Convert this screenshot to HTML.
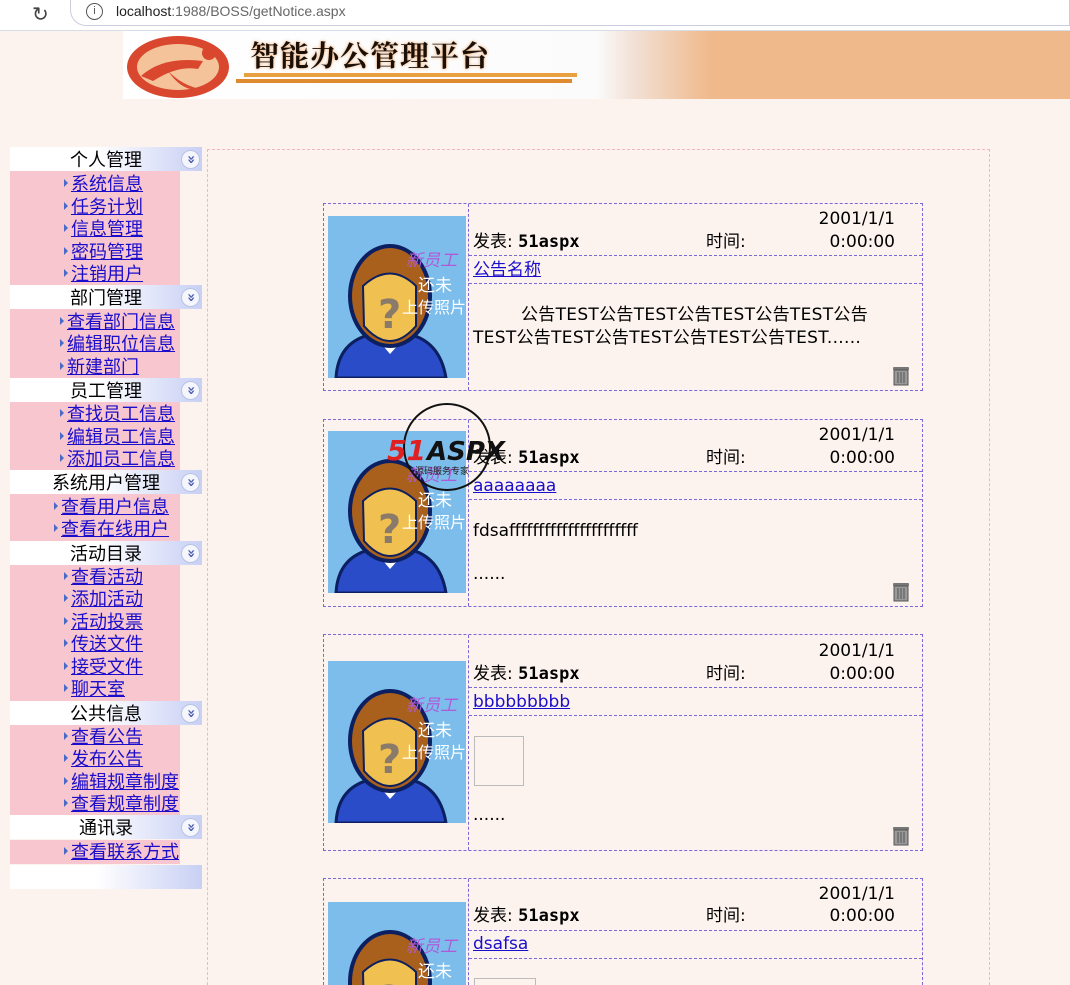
<!DOCTYPE html>
<html><head><meta charset="utf-8">
<style>
*{margin:0;padding:0;box-sizing:border-box}
html{overflow:hidden;width:1070px;height:985px}
body{width:1070px;height:985px;overflow:hidden;background:#fdf3ee;font-family:"DejaVu Sans","Noto Sans CJK SC",sans-serif;position:relative}
.abs{position:absolute}
.bar{left:0;top:0;width:1070px;height:31px;background:#fff;border-bottom:1px solid #d6dde6}
.url{left:70px;top:0;width:1000px;height:26px;border:1px solid #ccd;border-top:none;border-radius:0 0 0 16px;background:#fff}
.hd{left:10px;width:192px;height:24px;background:linear-gradient(90deg,#fff 0%,#fff 45%,#c8d0f4 100%);font:18px "Noto Sans CJK SC",sans-serif;color:#000;text-align:center;line-height:24px}
.hd i{position:absolute;right:2px;top:3px;width:19px;height:19px;border-radius:50%;background:#f4f6fc;border:1px solid #b8c2e6;font:bold 14px "DejaVu Sans",sans-serif;color:#4a5ab0;line-height:16px;font-style:normal;text-align:center;transform:rotate(90deg)}
.pk{left:10px;width:170px;background:#f7c6cf}
.it{position:absolute;width:192px;text-align:left;font:18px "Noto Sans CJK SC",sans-serif;height:22.5px;line-height:22px;white-space:nowrap}
.it a{color:#1a0dcc;text-decoration:underline}
.it b{position:absolute;left:-7px;top:7px;width:0;height:0;border-left:4px solid #4a6ac8;border-top:4px solid transparent;border-bottom:4px solid transparent}
.g4 .it{left:61px}.g6 .it{left:57px}.g6b .it{left:51px}
.card{left:323px;width:600px;border:1px dashed #7b68d8}
.card .v{position:absolute;left:144px;top:0;bottom:0;border-left:1px dashed #7b68d8}
.card .h{position:absolute;left:145px;right:0;border-top:1px dashed #7b68d8}
.t{position:absolute;font-size:17px;color:#000;white-space:nowrap;line-height:20px}
.t a{color:#1a0dcc}
.ph{position:absolute;left:4px;width:138px;height:162px}
.trash{position:absolute;right:11px;width:20px;height:22px}
</style></head><body>
<div class="abs bar"></div>
<div class="abs url"></div>
<div class="abs" style="left:32px;top:2px;font-size:20px;color:#444">&#8635;</div>
<div class="abs" style="left:86px;top:3px;width:17px;height:17px;border:1.5px solid #555;border-radius:50%;font:11px sans-serif;text-align:center;line-height:14px;color:#555">i</div>
<div class="abs" style="left:116px;top:3px;font:14px 'Liberation Sans',sans-serif;color:#222">localhost<span style="color:#666">:1988/BOSS/getNotice.aspx</span></div>

<div class="abs" style="left:123px;top:31px;width:947px;height:68px;background:linear-gradient(90deg,#fff 0%,#fbfbfb 50%,#f2e0d4 54%,#f0b98c 62%,#f0b98c 100%)"></div>
<svg class="abs" style="left:123px;top:31px" width="110" height="68"><ellipse cx="55" cy="36" rx="51" ry="31" fill="#d9472e"/><ellipse cx="55" cy="36" rx="41" ry="23" fill="#f4c39a"/><path d="M18 45 Q40 25 80 30 L75 38 Q55 34 30 50 Z" fill="#d9472e"/><path d="M45 40 Q60 55 78 58 Q60 62 45 40Z" fill="#d9472e"/><circle cx="86" cy="22" r="7" fill="#d9472e"/></svg>
<div class="abs" style="left:250px;top:34px;font:bold 29px 'Noto Serif CJK SC',serif;color:#1a1008;letter-spacing:1px;text-shadow:0 0 3px #f0a060">智能办公管理平台</div>
<div class="abs" style="left:244px;top:73px;width:333px;height:4px;background:#e8a040"></div>
<div class="abs" style="left:236px;top:79px;width:336px;height:4px;background:#e08a30"></div>

<div class="abs" style="left:207px;top:149px;width:783px;height:836px;border:1px dashed #f0b8b8;border-bottom:none"></div>

<div class="abs hd" style="top:147px">个人管理<i>»</i></div>
<div class="abs pk g4" style="top:171px;height:114px">
<div class="it" style="top:1px"><b></b><a>系统信息</a></div>
<div class="it" style="top:24px"><b></b><a>任务计划</a></div>
<div class="it" style="top:46px"><b></b><a>信息管理</a></div>
<div class="it" style="top:69px"><b></b><a>密码管理</a></div>
<div class="it" style="top:91px"><b></b><a>注销用户</a></div></div>
<div class="abs hd" style="top:285px">部门管理<i>»</i></div>
<div class="abs pk g6" style="top:309px;height:69px">
<div class="it" style="top:1px"><b></b><a>查看部门信息</a></div>
<div class="it" style="top:23px"><b></b><a>编辑职位信息</a></div>
<div class="it" style="top:46px"><b></b><a>新建部门</a></div></div>
<div class="abs hd" style="top:378px">员工管理<i>»</i></div>
<div class="abs pk g6" style="top:402px;height:68px">
<div class="it" style="top:0px"><b></b><a>查找员工信息</a></div>
<div class="it" style="top:23px"><b></b><a>编辑员工信息</a></div>
<div class="it" style="top:45px"><b></b><a>添加员工信息</a></div></div>
<div class="abs hd" style="top:470px">系统用户管理<i>»</i></div>
<div class="abs pk g6b" style="top:494px;height:47px">
<div class="it" style="top:1px"><b></b><a>查看用户信息</a></div>
<div class="it" style="top:23px"><b></b><a>查看在线用户</a></div></div>
<div class="abs hd" style="top:541px">活动目录<i>»</i></div>
<div class="abs pk g4" style="top:565px;height:136px">
<div class="it" style="top:0px"><b></b><a>查看活动</a></div>
<div class="it" style="top:22px"><b></b><a>添加活动</a></div>
<div class="it" style="top:45px"><b></b><a>活动投票</a></div>
<div class="it" style="top:67px"><b></b><a>传送文件</a></div>
<div class="it" style="top:90px"><b></b><a>接受文件</a></div>
<div class="it" style="top:112px"><b></b><a>聊天室</a></div></div>
<div class="abs hd" style="top:701px">公共信息<i>»</i></div>
<div class="abs pk g4" style="top:725px;height:90px">
<div class="it" style="top:0px"><b></b><a>查看公告</a></div>
<div class="it" style="top:22px"><b></b><a>发布公告</a></div>
<div class="it" style="top:45px"><b></b><a>编辑规章制度</a></div>
<div class="it" style="top:67px"><b></b><a>查看规章制度</a></div></div>
<div class="abs hd" style="top:815px">通讯录<i>»</i></div>
<div class="abs pk g4" style="top:840px;height:24px">
<div class="it" style="top:0px"><b></b><a>查看联系方式</a></div></div>
<div class="abs hd" style="top:865px"></div>

<svg width="0" height="0" style="position:absolute"><defs>
<g id="ph">
<rect width="138" height="162" fill="#7cbdeb"/>
<path d="M8 162 Q10 125 45 118 L80 118 Q112 125 118 162Z" fill="#2a4cc8" stroke="#0c1f60" stroke-width="3"/>
<path d="M45 118 L62 138 L80 118Z" fill="#fff"/>
<ellipse cx="62" cy="80" rx="40" ry="50" fill="#a8601c" stroke="#0c1f60" stroke-width="4"/>
<path d="M35 70 Q62 45 88 70 L88 110 Q62 140 36 110Z" fill="#f0c050" stroke="#0c1f60" stroke-width="2"/>
<text x="50" y="112" font-size="40" font-weight="bold" fill="#8a7a6a" font-family="DejaVu Sans">?</text>
<text x="78" y="50" font-size="17" fill="#b05ad8" font-style="italic" font-family="Noto Sans CJK SC">新员工</text>
<text x="90" y="75" font-size="17" fill="#fff" font-family="Noto Sans CJK SC">还未</text>
<text x="74" y="97" font-size="16" fill="#fff" font-family="Noto Sans CJK SC">上传照片</text>
</g>
<g id="tr"><rect x="2" y="3" width="16" height="3" rx="1" fill="#777"/><rect x="3" y="6" width="14" height="15" fill="#999" stroke="#555"/><path d="M7 8v11M10 8v11M13 8v11" stroke="#555"/></g>
</defs></svg>

<div class="abs card" style="top:203px;height:188px">
<svg class="ph" style="top:12px" viewBox="0 0 138 162"><use href="#ph"/></svg>
<div class="v"></div>
<div class="t" style="right:27px;top:5px">2001/1/1</div>
<div class="t" style="left:149px;top:28px">发表: <b style="font-family:'DejaVu Sans Mono',monospace">51aspx</b></div>
<div class="t" style="left:382px;top:28px">时间:</div>
<div class="t" style="right:27px;top:28px">0:00:00</div>
<div class="h" style="top:51px"></div>
<div class="t" style="left:149px;top:56px"><a><u>公告名称</u></a></div>
<div class="h" style="top:79px"></div>
<div class="t" style="left:197px;top:101px;letter-spacing:0.3px">公告TEST公告TEST公告TEST公告TEST公告</div>
<div class="t" style="left:149px;top:124px;letter-spacing:0.3px">TEST公告TEST公告TEST公告TEST公告TEST......</div>
<svg class="trash" style="top:160px"><use href="#tr"/></svg>
</div>

<div class="abs card" style="top:419px;height:188px">
<svg class="ph" style="top:11px" viewBox="0 0 138 162"><use href="#ph"/></svg>
<div class="v"></div>
<div class="t" style="right:27px;top:5px">2001/1/1</div>
<div class="t" style="left:149px;top:28px">发表: <b style="font-family:'DejaVu Sans Mono',monospace">51aspx</b></div>
<div class="t" style="left:382px;top:28px">时间:</div>
<div class="t" style="right:27px;top:28px">0:00:00</div>
<div class="h" style="top:51px"></div>
<div class="t" style="left:149px;top:56px"><a><u>aaaaaaaa</u></a></div>
<div class="h" style="top:79px"></div>
<div class="t" style="left:149px;top:101px">fdsaffffffffffffffffffffff</div>
<div class="t" style="left:149px;top:144px">......</div>
<svg class="trash" style="top:160px"><use href="#tr"/></svg>
</div>
<svg class="abs" style="left:385px;top:402px" width="130" height="95"><circle cx="62" cy="45" r="43" fill="none" stroke="#111" stroke-width="2"/><text x="2" y="58" font-size="28" font-weight="bold" font-style="italic" fill="#e02020" font-family="DejaVu Sans">51</text><text x="42" y="58" font-size="26" font-weight="bold" font-style="italic" fill="#111" font-family="DejaVu Sans">ASPX</text><text x="30" y="72" font-size="9" fill="#222" font-family="Noto Sans CJK SC">源码服务专家</text></svg>

<div class="abs card" style="top:634px;height:217px">
<svg class="ph" style="top:26px" viewBox="0 0 138 162"><use href="#ph"/></svg>
<div class="v"></div>
<div class="t" style="right:27px;top:6px">2001/1/1</div>
<div class="t" style="left:149px;top:29px">发表: <b style="font-family:'DejaVu Sans Mono',monospace">51aspx</b></div>
<div class="t" style="left:382px;top:29px">时间:</div>
<div class="t" style="right:27px;top:29px">0:00:00</div>
<div class="h" style="top:52px"></div>
<div class="t" style="left:149px;top:57px"><a><u>bbbbbbbbb</u></a></div>
<div class="h" style="top:80px"></div>
<div style="position:absolute;left:150px;top:101px;width:50px;height:50px;border:1px solid #bbb"></div>
<div class="t" style="left:149px;top:170px">......</div>
<svg class="trash" style="top:189px"><use href="#tr"/></svg>
</div>

<div class="abs card" style="top:878px;height:107px;border-bottom:none;overflow:hidden">
<svg class="ph" style="top:23px" viewBox="0 0 138 162"><use href="#ph"/></svg>
<div class="v"></div>
<div class="t" style="right:27px;top:5px">2001/1/1</div>
<div class="t" style="left:149px;top:27px">发表: <b style="font-family:'DejaVu Sans Mono',monospace">51aspx</b></div>
<div class="t" style="left:382px;top:27px">时间:</div>
<div class="t" style="right:27px;top:27px">0:00:00</div>
<div class="h" style="top:51px"></div>
<div class="t" style="left:149px;top:55px"><a><u>dsafsa</u></a></div>
<div class="h" style="top:79px"></div>
<div style="position:absolute;left:150px;top:99px;width:62px;height:30px;border:1px solid #bbb"></div>
</div>
</body></html>
